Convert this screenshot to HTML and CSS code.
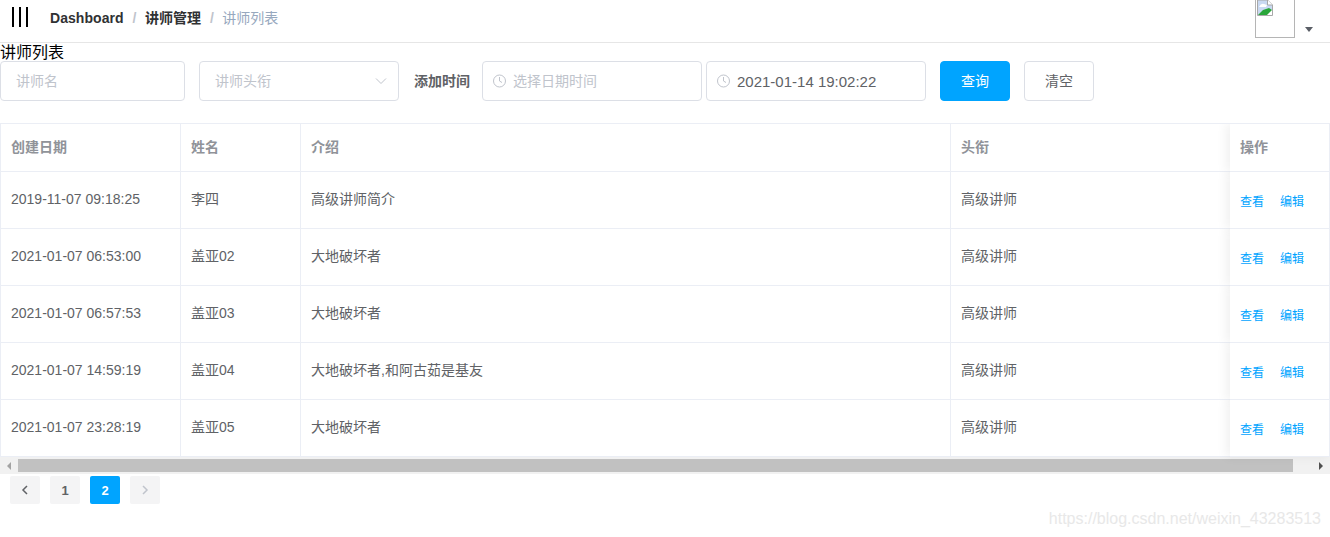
FILE: index.html
```html
<!DOCTYPE html>
<html lang="zh">
<head>
<meta charset="utf-8">
<title>讲师列表</title>
<link rel="stylesheet" href="styles.css">
</head>
<body>
<header class="navbar">
  <svg class="hamburger" width="16" height="20" viewBox="0 0 16 20"><path d="M1 0v20M8 0v20M15 0v20" stroke="#000" stroke-width="2" fill="none"/></svg>
  <nav class="crumbs">
    <span class="crumb-strong crumb-en">Dashboard</span><span class="sep">/</span>
    <span class="crumb-strong crumb-cjk">讲师管理</span><span class="sep">/</span>
    <span class="crumb-last crumb-cjk">讲师列表</span>
  </nav>
  <div class="avatar-wrap">
    <div class="avatar">
      <svg width="16" height="16" viewBox="0 0 16 16"><path d="M.5 0h10l5 5v10.500H.5z" fill="#c9d9f2" stroke="#a8a8a8"/><path d="M1 15l5-5 6-2 3 2v5z" fill="#2aa63a"/><path d="M10 15l5-5v5z" fill="#fff"/><path d="M2 7q2-4 5-3l3 1-1 2z" fill="#fff"/><path d="M10.500 0v5h5" fill="#fff" stroke="#a8a8a8"/></svg>
    </div>
    <span class="caret"></span>
  </div>
</header>
<div class="page-title">讲师列表</div>
<form class="filters">
  <div class="field name-field"><span class="ph">讲师名</span></div>
  <div class="field select-field"><span class="ph">讲师头衔</span>
    <svg class="chev" width="12" height="8" viewBox="0 0 12 8"><path d="M1 1.500l5 5 5-5" stroke="#c0c4cc" fill="none"/></svg>
  </div>
  <label class="time-label">添加时间</label>
  <div class="field date-field">
    <svg class="clock" width="14" height="14" viewBox="0 0 14 14"><circle cx="6.500" cy="7" r="6" stroke="#c0c4cc" fill="none"/><path d="M6.500 3v4l2.500 1.500" stroke="#c0c4cc" fill="none"/></svg>
    <span class="ph">选择日期时间</span>
  </div>
  <div class="field date-field">
    <svg class="clock" width="14" height="14" viewBox="0 0 14 14"><circle cx="6.500" cy="7" r="6" stroke="#c0c4cc" fill="none"/><path d="M6.500 3v4l2.500 1.500" stroke="#c0c4cc" fill="none"/></svg>
    <span class="val">2021-01-14 19:02:22</span>
  </div>
  <button type="button" class="btn primary">查询</button>
  <button type="button" class="btn plain">清空</button>
</form>
<section class="table-wrap">
  <table class="grid">
    <colgroup><col class="c1"><col class="c2"><col class="c3"><col class="c4"><col class="c5"></colgroup>
    <thead>
      <tr><th>创建日期</th><th>姓名</th><th>介绍</th><th>头衔</th><th class="fixed">操作</th></tr>
    </thead>
    <tbody>
      <tr><td>2019-11-07 09:18:25</td><td>李四</td><td>高级讲师简介</td><td>高级讲师</td><td class="fixed"><a class="lnk">查看</a><a class="lnk">编辑</a></td></tr>
      <tr><td>2021-01-07 06:53:00</td><td>盖亚02</td><td>大地破坏者</td><td>高级讲师</td><td class="fixed"><a class="lnk">查看</a><a class="lnk">编辑</a></td></tr>
      <tr><td>2021-01-07 06:57:53</td><td>盖亚03</td><td>大地破坏者</td><td>高级讲师</td><td class="fixed"><a class="lnk">查看</a><a class="lnk">编辑</a></td></tr>
      <tr><td>2021-01-07 14:59:19</td><td>盖亚04</td><td>大地破坏者,和阿古茹是基友</td><td>高级讲师</td><td class="fixed"><a class="lnk">查看</a><a class="lnk">编辑</a></td></tr>
      <tr><td>2021-01-07 23:28:19</td><td>盖亚05</td><td>大地破坏者</td><td>高级讲师</td><td class="fixed"><a class="lnk">查看</a><a class="lnk">编辑</a></td></tr>
    </tbody>
  </table>
  <div class="hscroll">
    <span class="arrow left"></span>
    <div class="track"><div class="thumb"></div></div>
    <span class="arrow right"></span>
  </div>
</section>
<div class="pager">
  <span class="pg"><svg width="8" height="12" viewBox="0 0 8 12"><path d="M6 2L2 6l4 4" stroke="#606266" stroke-width="1.500" fill="none"/></svg></span>
  <span class="pg">1</span>
  <span class="pg on">2</span>
  <span class="pg"><svg width="8" height="12" viewBox="0 0 8 12"><path d="M2 2l4 4-4 4" stroke="#c0c4cc" stroke-width="1.500" fill="none"/></svg></span>
</div>
<div class="watermark">https://blog.csdn.net/weixin_43283513</div>
</body>
</html>
```
FILE: styles.css
```css
* { box-sizing: border-box; }
html, body { margin: 0; height: 537px; overflow: hidden; background: #fff; }
body { font-family: "Liberation Sans", "Noto Sans CJK SC", sans-serif; font-size: 14px; color: #606266; position: relative; }

.navbar { height: 43px; border-bottom: 1px solid #e6e6e6; display: flex; align-items: center; padding-left: 12px; }
.hamburger { flex: none; margin-top: -8px; }
.crumbs { margin-left: 22px; display: flex; align-items: center; font-size: 14px; margin-top: -6px; }
.crumb-strong { font-weight: 700; color: #303133; }
.crumb-en { letter-spacing: 0.05px; }
.crumb-cjk { margin-bottom: 2px; }
.sep { color: #c0c4cc; font-weight: 700; margin: 0 8.500px 0 9px; }
.crumb-last { color: #97a8be; }
.avatar-wrap { margin-left: auto; width: 75px; display: flex; align-self: flex-start; height: 42px; }
.avatar { width: 40px; height: 38px; border: 1px solid #b5b5b5; border-top: 0; padding-left: 1px; }
.avatar svg { display: block; }
.caret { width: 0; height: 0; border: 4px solid transparent; border-top: 5px solid #5a5e66; border-bottom: 0; margin: 27px 0 0 10px; }

.page-title { height: 18px; font-size: 16px; line-height: 16px; color: #000; font-family: "Noto Sans CJK SC", sans-serif; }

.filters { display: flex; align-items: center; height: 40px; }
.field { height: 40px; border: 1px solid #dcdfe6; border-radius: 4px; display: flex; align-items: center; flex: none; background: #fff; }
.ph { color: #c0c4cc; margin-bottom: 2px; }
.val { color: #606266; font-size: 15px; }
.name-field { width: 185px; padding-left: 15px; }
.select-field { width: 200px; margin-left: 14px; padding: 0 11px 0 15px; justify-content: space-between; }
.time-label { font-weight: 700; color: #606266; margin: 0 12px 2px 15px; white-space: nowrap; }
.date-field { width: 220px; padding-left: 10px; }
.date-field + .date-field { margin-left: 4px; }
.clock { margin-right: 6px; flex: none; }
.btn { height: 40px; border-radius: 4px; font: inherit; flex: none; padding: 0 0 2px; }
.primary { width: 70px; margin-left: 14px; background: #00a4ff; border: 1px solid #00a4ff; color: #fff; }
.plain { width: 70px; margin-left: 14px; background: #fff; border: 1px solid #dcdfe6; color: #606266; }

.table-wrap { margin-top: 22px; }
.grid { table-layout: fixed; width: 1330px; border-collapse: separate; border-spacing: 0; border-top: 1px solid #ebeef5; }
.c1 { width: 181px; }
.c2 { width: 120px; }
.c3 { width: 650px; }
.c4 { width: 279px; }
.c5 { width: 100px; }
th, td { text-align: left; padding: 0 10px 5px; border-right: 1px solid #ebeef5; border-bottom: 1px solid #ebeef5; background: #fff; font-size: 14px; }
th { padding-bottom: 3px; }
td:first-child { padding-bottom: 3px; }
th:first-child, td:first-child { border-left: 1px solid #ebeef5; }
th:nth-child(4), td:nth-child(4) { border-right: 0; }
th { height: 48px; color: #909399; font-weight: 700; }
td { height: 57px; color: #606266; }
.fixed { box-shadow: -4px 0 10px rgba(0, 0, 0, .06); position: relative; clip-path: inset(0 0 -8px -12px); white-space: nowrap; }
.lnk { color: #00a4ff; font-size: 12px; margin-right: 16px; position: relative; top: 3px; }

.hscroll { height: 17px; display: flex; align-items: center; background: #f1f1f1; }
.track { flex: 1; height: 13px; }
.thumb { width: 1275px; height: 13px; background: #c1c1c1; }
.arrow { width: 18px; height: 17px; flex: none; display: flex; align-items: center; justify-content: center; }
.arrow::before { content: ""; border: 4px solid transparent; }
.left::before { border-right: 4px solid #a3a3a3; border-left: 0; }
.right::before { border-left: 4px solid #505050; border-right: 0; }

.pager { display: flex; gap: 10px; padding: 2px 0 0 10px; }
.pg { width: 30px; height: 28px; border-radius: 2px; background: #f4f4f5; display: flex; align-items: center; justify-content: center; font-weight: 700; font-size: 13px; color: #606266; }
.pg.on { background: #00a4ff; color: #fff; }

.watermark { position: absolute; right: 9px; top: 510px; font-size: 16px; color: #e8e8e8; white-space: nowrap; }
```
